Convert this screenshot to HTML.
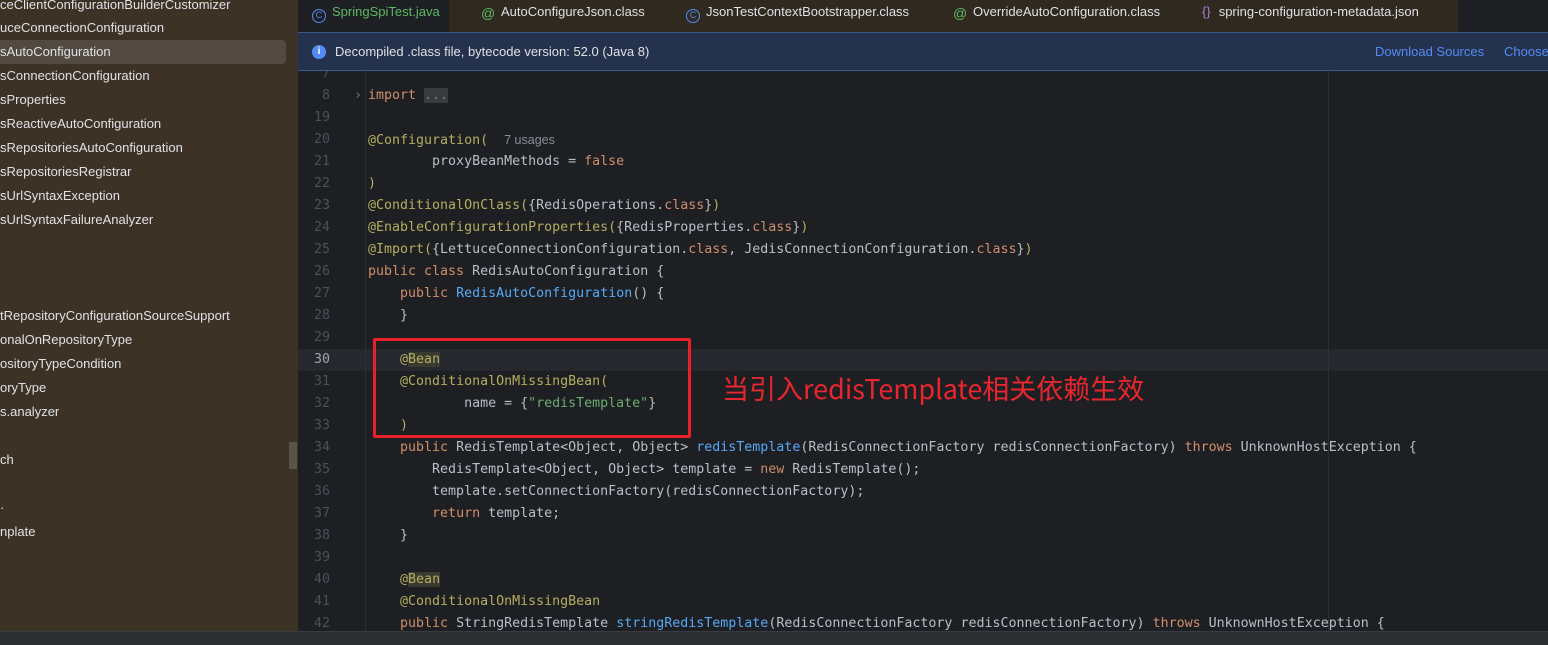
<!DOCTYPE html>
<html><head><meta charset="utf-8"><style>
*{margin:0;padding:0;box-sizing:border-box}
body{width:1548px;height:645px;overflow:hidden;background:#1e1f22;position:relative;font-family:"Liberation Sans","Noto Sans CJK SC",sans-serif}
#side{position:absolute;left:0;top:0;width:298px;height:631px;background:#3d3226}
.si{position:absolute;left:0;font-size:13px;color:#dfe1e5;white-space:nowrap;height:24px;line-height:24px}
#sel{position:absolute;left:0;top:40px;width:286px;height:24px;background:#524a40;border-radius:0 4px 4px 0}
#thumb{position:absolute;left:289px;top:442px;width:8px;height:27px;background:#5a534a}
#tabs{position:absolute;left:298px;top:0;width:1250px;height:32px;background:#1e1f22}
.tab{position:absolute;top:0;height:32px;background:#2f291f;font-size:13px;color:#dfe1e5;line-height:24px;white-space:nowrap}
.tab .ic{display:inline-block;width:14px;height:14px;border:1.5px solid;border-radius:50%;vertical-align:-2px;margin-right:6px;font-size:9px;line-height:11px;text-align:center}
#ban{position:absolute;left:298px;top:32px;width:1250px;height:39px;background:#25324d;border-top:1px solid #3b5a94;border-bottom:1px solid #3b5a94;font-size:13px;color:#dfe1e5;line-height:37px;white-space:nowrap}
#ban .i{position:absolute;left:14px;top:12px;width:14px;height:14px;border-radius:50%;background:#548af7;color:#fff;font-size:10px;line-height:14px;text-align:center;font-weight:bold}
#ban a{position:absolute;color:#548af7;text-decoration:none}
#code{position:absolute;left:298px;top:71px;width:1250px;height:560px;overflow:hidden}
.ln{position:absolute;left:0;width:1250px;height:22px;line-height:22px;font-family:"DejaVu Sans Mono","Liberation Mono",monospace;font-size:13.3px;color:#bcbec4;white-space:pre}
.ln .n{position:absolute;right:1218px;color:#4b5059;text-align:right}
.ln .c{position:absolute;left:70px}
.a{color:#b3ae60}.k{color:#cf8e6d}.m{color:#56a8f5}.s{color:#6aab73}.g{color:#8a8d93;font-family:"Liberation Sans",sans-serif;font-size:12.5px}
.bh{background:#3a3b30}
#bot{position:absolute;left:0;top:631px;width:1548px;height:14px;background:#2b2d30;border-top:1px solid #393b40}
</style></head><body>
<div id="side">
<div id="sel"></div>
<div class="si" style="top:-7px">ceClientConfigurationBuilderCustomizer</div>
<div class="si" style="top:16px">uceConnectionConfiguration</div>
<div class="si" style="top:40px">sAutoConfiguration</div>
<div class="si" style="top:64px">sConnectionConfiguration</div>
<div class="si" style="top:88px">sProperties</div>
<div class="si" style="top:112px">sReactiveAutoConfiguration</div>
<div class="si" style="top:136px">sRepositoriesAutoConfiguration</div>
<div class="si" style="top:160px">sRepositoriesRegistrar</div>
<div class="si" style="top:184px">sUrlSyntaxException</div>
<div class="si" style="top:208px">sUrlSyntaxFailureAnalyzer</div>
<div class="si" style="top:304px">tRepositoryConfigurationSourceSupport</div>
<div class="si" style="top:328px">onalOnRepositoryType</div>
<div class="si" style="top:352px">ositoryTypeCondition</div>
<div class="si" style="top:376px">oryType</div>
<div class="si" style="top:400px">s.analyzer</div>
<div class="si" style="top:448px">ch</div>
<div class="si" style="top:496px">·</div>
<div class="si" style="top:520px">nplate</div>
<div id="thumb"></div>
</div>
<div id="tabs">
<div class="tab" style="left:0;width:151px;background:#1e1f22;padding-left:14px;color:#5fb865"><span class="ic" style="color:#548af7">C</span>SpringSpiTest.java</div>
<div class="tab" style="left:151px;width:221px;padding-left:32px"><span class="ic" style="color:#5fb865;border:none;font-size:14px">@</span>AutoConfigureJson.class</div>
<div class="tab" style="left:372px;width:262px;padding-left:16px"><span class="ic" style="color:#548af7">C</span>JsonTestContextBootstrapper.class</div>
<div class="tab" style="left:634px;width:258px;padding-left:21px"><span class="ic" style="color:#5fb865;border:none;font-size:14px">@</span>OverrideAutoConfiguration.class</div>
<div class="tab" style="left:892px;width:268px;padding-left:12px"><span style="color:#a77dd6;margin-right:8px">{}</span>spring-configuration-metadata.json</div>
</div>
<div id="code">
<div class="ln" style="top:278px;background:#26282e"></div>
<div style="position:absolute;left:67px;top:0;width:1px;height:560px;background:#2d2f33"></div>
<div style="position:absolute;left:1030px;top:0;width:1px;height:560px;background:#2d2f33"></div>
<div class="ln" style="top:-8px"><span class="n">7</span></div>
<div class="ln" style="top:14px"><span class="n">8</span><span style="position:absolute;left:56px;color:#6f737a">›</span><span class="c"><span class="k">import</span> <span style="background:#393b3f;color:#7a7e85">...</span></span></div>
<div class="ln" style="top:36px"><span class="n">19</span></div>
<div class="ln" style="top:58px"><span class="n">20</span><span class="c"><span class="a">@Configuration(</span>  <span class="g">7 usages</span></span></div>
<div class="ln" style="top:80px"><span class="n">21</span><span class="c">        proxyBeanMethods = <span class="k">false</span></span></div>
<div class="ln" style="top:102px"><span class="n">22</span><span class="c"><span class="a">)</span></span></div>
<div class="ln" style="top:124px"><span class="n">23</span><span class="c"><span class="a">@ConditionalOnClass(</span>{RedisOperations.<span class="k">class</span>}<span class="a">)</span></span></div>
<div class="ln" style="top:146px"><span class="n">24</span><span class="c"><span class="a">@EnableConfigurationProperties(</span>{RedisProperties.<span class="k">class</span>}<span class="a">)</span></span></div>
<div class="ln" style="top:168px"><span class="n">25</span><span class="c"><span class="a">@Import(</span>{LettuceConnectionConfiguration.<span class="k">class</span>, JedisConnectionConfiguration.<span class="k">class</span>}<span class="a">)</span></span></div>
<div class="ln" style="top:190px"><span class="n">26</span><span class="c"><span class="k">public class</span> RedisAutoConfiguration {</span></div>
<div class="ln" style="top:212px"><span class="n">27</span><span class="c">    <span class="k">public</span> <span class="m">RedisAutoConfiguration</span>() {</span></div>
<div class="ln" style="top:234px"><span class="n">28</span><span class="c">    }</span></div>
<div class="ln" style="top:256px"><span class="n">29</span></div>
<div class="ln" style="top:278px"><span class="n" style="color:#a1a3ab">30</span><span class="c">    <span class="a">@<span class="bh">Bean</span></span></span></div>
<div class="ln" style="top:300px"><span class="n">31</span><span class="c">    <span class="a">@ConditionalOnMissingBean(</span></span></div>
<div class="ln" style="top:322px"><span class="n">32</span><span class="c">            name = {<span class="s">"redisTemplate"</span>}</span></div>
<div class="ln" style="top:344px"><span class="n">33</span><span class="c">    <span class="a">)</span></span></div>
<div class="ln" style="top:366px"><span class="n">34</span><span class="c">    <span class="k">public</span> RedisTemplate&lt;Object, Object&gt; <span class="m">redisTemplate</span>(RedisConnectionFactory redisConnectionFactory) <span class="k">throws</span> UnknownHostException {</span></div>
<div class="ln" style="top:388px"><span class="n">35</span><span class="c">        RedisTemplate&lt;Object, Object&gt; template = <span class="k">new</span> RedisTemplate();</span></div>
<div class="ln" style="top:410px"><span class="n">36</span><span class="c">        template.setConnectionFactory(redisConnectionFactory);</span></div>
<div class="ln" style="top:432px"><span class="n">37</span><span class="c">        <span class="k">return</span> template;</span></div>
<div class="ln" style="top:454px"><span class="n">38</span><span class="c">    }</span></div>
<div class="ln" style="top:476px"><span class="n">39</span></div>
<div class="ln" style="top:498px"><span class="n">40</span><span class="c">    <span class="a">@<span class="bh">Bean</span></span></span></div>
<div class="ln" style="top:520px"><span class="n">41</span><span class="c">    <span class="a">@ConditionalOnMissingBean</span></span></div>
<div class="ln" style="top:542px"><span class="n">42</span><span class="c">    <span class="k">public</span> StringRedisTemplate <span class="m">stringRedisTemplate</span>(RedisConnectionFactory redisConnectionFactory) <span class="k">throws</span> UnknownHostException {</span></div>
<div style="position:absolute;left:75px;top:267px;width:318px;height:100px;border:3px solid #e8202a;border-radius:2px"></div>
<div style="position:absolute;left:424px;top:298px;font-family:'Noto Sans CJK SC',sans-serif;font-size:27px;color:#e8262f;line-height:38px;white-space:nowrap">当引入redisTemplate相关依赖生效</div>
</div>
<div id="ban"><span class="i">i</span><span style="position:absolute;left:37px">Decompiled .class file, bytecode version: 52.0 (Java 8)</span><a style="left:1077px">Download Sources</a><a style="left:1206px">Choose Sources...</a></div>
<div id="bot"></div>
</body></html>
